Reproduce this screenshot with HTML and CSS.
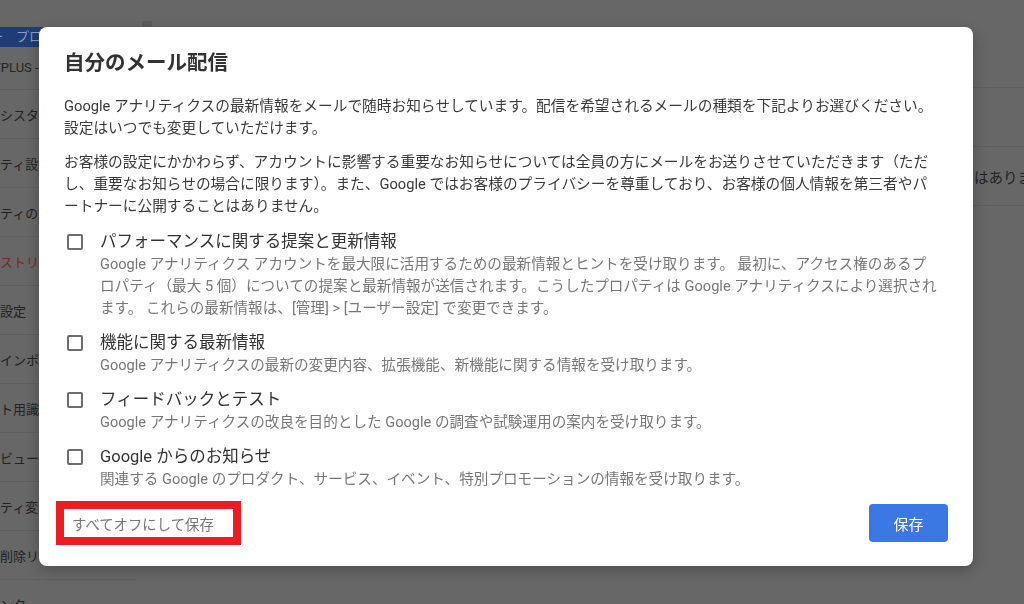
FILE: index.html
```html
<!DOCTYPE html>
<html lang="ja">
<head>
    <meta charset="utf-8">
    <title>自分のメール配信</title>
    <link rel="stylesheet" href="styles.css">
</head>
<body>
    <div class="topbar"><span class="tab-mark"></span></div>

    <div class="page">
        <aside class="sidebar">
            <div class="back-bar">ー　プロパティ</div>
            <div class="account">YPLUS - アカウント</div>
            <ul class="nav">
                <li>シスタント</li>
                <li>ティ設定</li>
                <li>ティのアクセス管理</li>
                <li class="active">ストリーム</li>
                <li>設定</li>
                <li>インポート</li>
                <li>ト用識別子</li>
                <li>ビュー</li>
                <li>ティ変更履歴</li>
                <li>削除リクエスト</li>
                <li>ンタ</li>
            </ul>
        </aside>

        <main class="content">
            <div class="table">
                <div class="row"></div>
                <div class="row"><span class="row-text">はありません</span></div>
            </div>
        </main>
    </div>

    <div class="dialog">
        <h2 class="dialog-title">自分のメール配信</h2>

        <p class="intro">Google アナリティクスの最新情報をメールで随時お知らせしています。配信を希望されるメールの種類を下記よりお選びください。<br>設定はいつでも変更していただけます。</p>

        <p class="intro intro-last">お客様の設定にかかわらず、アカウントに影響する重要なお知らせについては全員の方にメールをお送りさせていただきます（ただ<br>し、重要なお知らせの場合に限ります）。また、Google ではお客様のプライバシーを尊重しており、お客様の個人情報を第三者やパ<br>ートナーに公開することはありません。</p>

        <ul class="options">
            <li class="option">
                <span class="check"></span>
                <div>
                    <div class="option-label">パフォーマンスに関する提案と更新情報</div>
                    <div class="option-desc">Google アナリティクス アカウントを最大限に活用するための最新情報とヒントを受け取ります。 最初に、アクセス権のあるプ<br>ロパティ（最大 5 個）についての提案と最新情報が送信されます。こうしたプロパティは Google アナリティクスにより選択され<br>ます。 これらの最新情報は、[管理] &gt; [ユーザー設定] で変更できます。</div>
                </div>
            </li>
            <li class="option">
                <span class="check"></span>
                <div>
                    <div class="option-label">機能に関する最新情報</div>
                    <div class="option-desc">Google アナリティクスの最新の変更内容、拡張機能、新機能に関する情報を受け取ります。</div>
                </div>
            </li>
            <li class="option">
                <span class="check"></span>
                <div>
                    <div class="option-label">フィードバックとテスト</div>
                    <div class="option-desc">Google アナリティクスの改良を目的とした Google の調査や試験運用の案内を受け取ります。</div>
                </div>
            </li>
            <li class="option">
                <span class="check"></span>
                <div>
                    <div class="option-label">Google からのお知らせ</div>
                    <div class="option-desc">関連する Google のプロダクト、サービス、イベント、特別プロモーションの情報を受け取ります。</div>
                </div>
            </li>
        </ul>

        <div class="dialog-footer">
            <button class="btn-off">すべてオフにして保存</button>
            <button class="btn-save">保存</button>
        </div>
    </div>
</body>
</html>
```

FILE: styles.css
```css
body {
  margin: 0;
  height: 604px;
  overflow: hidden;
  background-color: #676767;
  font-family: Roboto, "Noto Sans CJK JP", sans-serif;
}

.topbar {
  height: 27px;
  display: flex;
  align-items: flex-end;
  padding-left: 142px;
}

.tab-mark {
  width: 10px;
  height: 6px;
  background-color: #5c5c5c;
}

.page {
  display: flex;
}

.sidebar {
  width: 135px;
  flex: none;
  overflow: hidden;
}

.back-bar {
  width: 120px;
  height: 20px;
  line-height: 20px;
  background-color: #1f3c78;
  color: #8d9dc4;
  font-size: 13px;
  white-space: nowrap;
  overflow: hidden;
  text-indent: -10px;
}

.account {
  height: 42px;
  line-height: 42px;
  border-bottom: 1px solid #5e5e5e;
  color: #262626;
  font-size: 13px;
  white-space: nowrap;
  text-indent: -7px;
}

.nav {
  list-style: none;
  margin: 0;
  padding: 0;
}

.nav li {
  height: 48px;
  display: flex;
  align-items: center;
  border-bottom: 1px solid #5e5e5e;
  color: #222;
  font-size: 13px;
  white-space: nowrap;
}

.nav li.active {
  color: #7a2626;
}

.content {
  flex: 1;
  padding-top: 60px;
}

.table {
  border-top: 1px solid #5e5e5e;
}

.row {
  height: 58px;
  display: flex;
  justify-content: flex-end;
  align-items: center;
  border-bottom: 1px solid #5e5e5e;
}

.row-text {
  width: 50px;
  overflow: hidden;
  white-space: nowrap;
  color: #232323;
  font-size: 14.5px;
}

.dialog {
  position: fixed;
  top: 27px;
  left: 39px;
  width: 934px;
  box-sizing: border-box;
  padding: 22px 25px 21px;
  background-color: #fff;
  border-radius: 8px;
  box-shadow: 0 4px 14px rgba(0, 0, 0, 0.25);
}

.dialog-title {
  margin: 0 0 18px;
  font-size: 20.5px;
  line-height: 28px;
  font-weight: 700;
  color: #333;
}

.intro {
  margin: 0 0 12px;
  font-size: 14.7px;
  line-height: 22px;
  color: #3a3a3a;
  white-space: nowrap;
}

.intro-last {
  margin-bottom: 14px;
}

.options {
  list-style: none;
  margin: 0;
  padding: 0;
  display: flex;
  flex-direction: column;
  gap: 13px;
}

.option {
  display: flex;
}

.check {
  flex: none;
  width: 16px;
  height: 16px;
  box-sizing: border-box;
  border: 2px solid #6e6e6e;
  border-radius: 2px;
  margin: 3px 17px 0 3px;
}

.option-label {
  font-size: 16.5px;
  line-height: 22px;
  color: #333;
}

.option-desc {
  font-size: 14.6px;
  line-height: 22px;
  color: #777;
  white-space: nowrap;
}

.dialog-footer {
  margin-top: 11px;
  display: flex;
  justify-content: space-between;
  align-items: center;
}

.btn-off {
  margin-left: -8px;
  width: 185px;
  height: 44px;
  box-sizing: border-box;
  border: 8px solid #ed1c24;
  padding: 0 0 0 8px;
  background-color: #fff;
  color: #777;
  font-family: inherit;
  font-size: 14.4px;
  text-align: left;
}

.btn-save {
  width: 79px;
  height: 38px;
  border: none;
  border-radius: 4px;
  background-color: #3c78e4;
  color: #fff;
  font-family: inherit;
  font-size: 15px;
}
```
